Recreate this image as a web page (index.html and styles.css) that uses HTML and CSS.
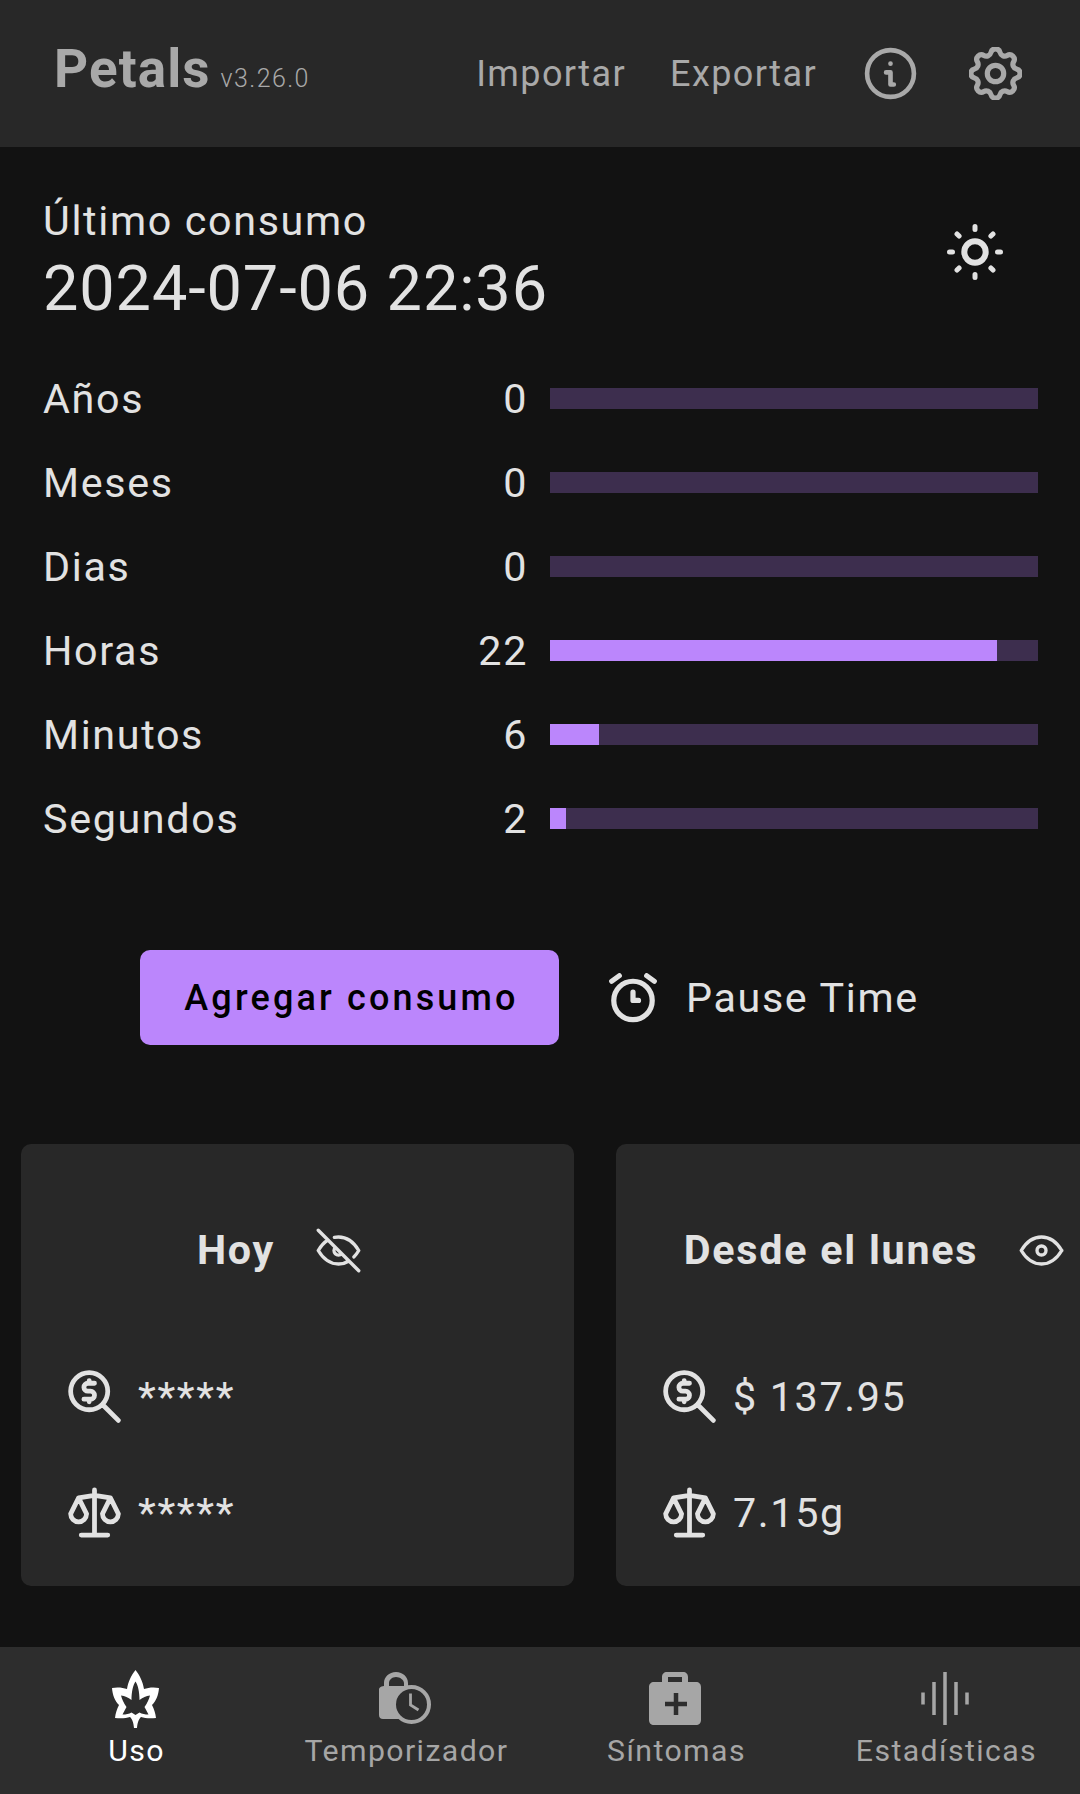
FILE: index.html
```html
<!DOCTYPE html>
<html lang="es">
<head>
  <meta charset="UTF-8" />
  <meta name="viewport" content="width=device-width, initial-scale=1.0"/>
  <title>Petals</title>
  <link rel="stylesheet" href="styles.css">
</head>
<body>

  <header class="topbar">
    <div class="brand">
      <span class="brand-name">Petals</span>
      <span class="brand-version">v3.26.0</span>
    </div>
    <nav class="topbar-actions">
      <a class="topbar-link">Importar</a>
      <a class="topbar-link">Exportar</a>
      <svg class="topbar-icon info-icon" viewBox="0 0 24 24">
        <circle cx="12" cy="12" r="10.6"/>
        <path d="M12 7.500v.1M10 11.500H12V17H13.500"/>
      </svg>
      <svg class="topbar-icon gear-icon" viewBox="2.3 2.3 19.4 19.4">
        <path d="M10.325 4.317c.426 -1.756 2.924 -1.756 3.35 0a1.724 1.724 0 0 0 2.573 1.066c1.543 -.94 3.31 .826 2.37 2.37a1.724 1.724 0 0 0 1.065 2.572c1.756 .426 1.756 2.924 0 3.35a1.724 1.724 0 0 0 -1.066 2.573c.94 1.543 -.826 3.31 -2.37 2.37a1.724 1.724 0 0 0 -2.572 1.065c-.426 1.756 -2.924 1.756 -3.35 0a1.724 1.724 0 0 0 -2.573 -1.066c-1.543 .94 -3.31 -.826 -2.37 -2.37a1.724 1.724 0 0 0 -1.065 -2.572c-1.756 -.426 -1.756 -2.924 0 -3.35a1.724 1.724 0 0 0 1.066 -2.573c-.94 -1.543 .826 -3.31 2.37 -2.37c1 .608 2.296 .07 2.572 -1.065z"/>
        <circle cx="12" cy="12" r="3"/>
      </svg>
    </nav>
  </header>

  <main class="content">
    <section class="timer">
      <div class="last-use">
        <div>
          <div class="last-use-label">Último consumo</div>
          <div class="last-use-date">2024-07-06 22:36</div>
        </div>
        <svg class="sun-icon" viewBox="0 0 58 58">
          <circle class="sun-ring" cx="29" cy="29" r="10.700"/>
          <path d="M29 3.500v3M29 51.500v3M3.500 29h3M51.500 29h3M11 11l2.100 2.100M47 11l-2.100 2.100M11 47l2.100 -2.100M47 47l-2.100 -2.100"/>
        </svg>
      </div>

      <div class="time-rows">
        <div class="time-row">
          <span>Años</span><span class="time-value">0</span>
          <div class="bar"><div class="bar-fill" style="width: 0%"></div></div>
        </div>
        <div class="time-row">
          <span>Meses</span><span class="time-value">0</span>
          <div class="bar"><div class="bar-fill" style="width: 0%"></div></div>
        </div>
        <div class="time-row">
          <span>Dias</span><span class="time-value">0</span>
          <div class="bar"><div class="bar-fill" style="width: 0%"></div></div>
        </div>
        <div class="time-row">
          <span>Horas</span><span class="time-value">22</span>
          <div class="bar"><div class="bar-fill" style="width: 91.67%"></div></div>
        </div>
        <div class="time-row">
          <span>Minutos</span><span class="time-value">6</span>
          <div class="bar"><div class="bar-fill" style="width: 10%"></div></div>
        </div>
        <div class="time-row">
          <span>Segundos</span><span class="time-value">2</span>
          <div class="bar"><div class="bar-fill" style="width: 3.33%"></div></div>
        </div>
      </div>
    </section>

    <div class="actions">
      <button class="add-btn">Agregar consumo</button>
      <div class="pause">
        <svg class="alarm-icon" viewBox="3.3 3 17.4 18.2">
          <path d="M5 13a7 7 0 1 0 14 0a7 7 0 0 0 -14 0M12 10v3h2M7 4l-2.750 2M17 4l2.750 2"/>
        </svg>
        <span>Pause Time</span>
      </div>
    </div>

    <div class="cards">
      <div class="card">
        <div class="card-title">
          <h3>Hoy</h3>
          <svg class="eye-icon" viewBox="2 2 20 20">
            <path d="M10.585 10.587a2 2 0 0 0 2.829 2.828M16.681 16.673a8.717 8.717 0 0 1 -4.681 1.327c-3.600 0 -6.600 -2 -9 -6c1.272 -2.120 2.712 -3.678 4.320 -4.674m2.860 -1.146a9.055 9.055 0 0 1 1.820 -.18c3.600 0 6.600 2 9 6c-.666 1.110 -1.379 2.067 -2.138 2.870M3 3l18 18"/>
          </svg>
        </div>
        <div class="stat">
          <svg class="stat-icon" viewBox="2 2 20 20">
            <path d="M3 10a7 7 0 1 0 14 0a7 7 0 1 0 -14 0M21 21l-6 -6M12 7h-2.500a1.500 1.500 0 0 0 0 3h1a1.500 1.500 0 0 1 0 3h-2.500M10 13v1m0 -8v1"/>
          </svg>
          <span>*****</span>
        </div>
        <div class="stat">
          <svg class="stat-icon" viewBox="2 2 20 19">
            <path d="M7 20h10M6 6l6 -1l6 1M12 3v17M9 12l-3 -6l-3 6a3 3 0 0 0 6 0M21 12l-3 -6l-3 6a3 3 0 0 0 6 0"/>
          </svg>
          <span>*****</span>
        </div>
      </div>

      <div class="card">
        <div class="card-title">
          <h3>Desde el lunes</h3>
          <svg class="eye-icon" viewBox="2 2 20 20">
            <path d="M10 12a2 2 0 1 0 4 0a2 2 0 0 0 -4 0M21 12c-2.400 4 -5.400 6 -9 6c-3.600 0 -6.600 -2 -9 -6c2.400 -4 5.400 -6 9 -6c3.600 0 6.600 2 9 6"/>
          </svg>
        </div>
        <div class="stat">
          <svg class="stat-icon" viewBox="2 2 20 20">
            <path d="M3 10a7 7 0 1 0 14 0a7 7 0 1 0 -14 0M21 21l-6 -6M12 7h-2.500a1.500 1.500 0 0 0 0 3h1a1.500 1.500 0 0 1 0 3h-2.500M10 13v1m0 -8v1"/>
          </svg>
          <span>$ 137.95</span>
        </div>
        <div class="stat">
          <svg class="stat-icon" viewBox="2 2 20 19">
            <path d="M7 20h10M6 6l6 -1l6 1M12 3v17M9 12l-3 -6l-3 6a3 3 0 0 0 6 0M21 12l-3 -6l-3 6a3 3 0 0 0 6 0"/>
          </svg>
          <span>7.15g</span>
        </div>
      </div>
    </div>
  </main>

  <nav class="tabs">
    <div class="tab active">
      <div class="tab-icon">
        <svg class="leaf-icon" viewBox="0 0 47 58">
          <path fill-rule="evenodd" d="M23.500 0C27.500 5 31 12 32 19C36 17.500 42 17 47 18C46.500 25 44 31 40 35C42 39 43.500 43 44 48C39 48.500 33 48.500 29 47C27 49 25.500 52 25 58H22C21.500 52 20 49 18 47C14 48.500 8 48.500 3 48C3.500 43 5 39 7 35C3 31 .5 25 0 18C5 17 11 17.500 15 19C16 12 19.500 5 23.500 0ZM23.500 11.500C21 15 19.500 22 19.500 30C16 27.500 13 26 9 25.500C10 29 11.500 33 14.500 37L10.500 44.500C14 44.500 17 44 19.500 42.500L23.500 45L27.500 42.500C30 44 33 44.500 36.500 44.500L32.500 37C35.500 33 37 29 38 25.500C34 26 31 27.500 27.500 30C27.500 22 26 15 23.500 11.500Z"/>
        </svg>
      </div>
      <span>Uso</span>
    </div>
    <div class="tab">
      <div class="tab-icon">
        <svg class="bag-clock-icon" viewBox="0 0 53 53">
          <path class="fill" fill-rule="evenodd" d="M17 0C24 0 29 5 29 11V14H32V47H4C1.500 47 0 45.500 0 43V18C0 16 1 14.500 5 14V11C5 5 10 0 17 0ZM17 5C13 5 10 8 10 11V14H25V11C25 8 21 5 17 5Z"/>
          <circle class="clock-ring" cx="32.500" cy="32.500" r="17.500"/>
          <path class="clock-hands" d="M31.500 21.500V33L39.500 38"/>
        </svg>
      </div>
      <span>Temporizador</span>
    </div>
    <div class="tab">
      <div class="tab-icon">
        <svg class="kit-icon" viewBox="0 0 52 53">
          <path class="fill" fill-rule="evenodd" d="M18 0H34C37 0 39 2 39 5V10H47C50 10 52 12 52 15V48C52 51 50 53 47 53H5C2 53 0 51 0 48V15C0 12 2 10 5 10H13V5C13 2 15 0 18 0ZM19 5V10H33V5Z"/>
          <path class="kit-plus" d="M27 21V43M16 32H38"/>
        </svg>
      </div>
      <span>Síntomas</span>
    </div>
    <div class="tab">
      <div class="tab-icon">
        <svg class="wave-icon" viewBox="0 0 48 53">
          <path d="M2 20.500V32.500M13 10V43M24 0V53M35 10V43M46 20.500V32.500"/>
        </svg>
      </div>
      <span>Estadísticas</span>
    </div>
  </nav>

</body>
</html>
```

FILE: styles.css
```css
* {
  box-sizing: border-box;
}

html, body {
  height: 100%;
}

body {
  display: flex;
  flex-direction: column;
  width: 1080px;
  height: 1794px;
  margin: 0;
  overflow: hidden;
  background: #121212;
  color: #e2e2e2;
  font-family: Roboto, "Noto Sans", sans-serif;
  font-size: 41.25px;
  letter-spacing: 1.65px;
}

svg {
  flex: none;
  display: block;
  fill: none;
  stroke: currentColor;
  stroke-linecap: round;
  stroke-linejoin: round;
}

/* top bar */
.topbar {
  flex: none;
  display: flex;
  justify-content: space-between;
  align-items: center;
  height: 147px;
  padding: 0 58px 0 54px;
  background: #282828;
  color: #a9a9a9;
}

.brand {
  display: flex;
  align-items: baseline;
  gap: 10px;
  margin-bottom: 9px;
}

.brand-name {
  font-size: 53px;
  font-weight: 700;
  letter-spacing: 1.1px;
}

.brand-version {
  font-size: 25px;
  font-weight: 300;
  letter-spacing: 1.4px;
}

.topbar-actions {
  display: flex;
  align-items: center;
}

.topbar-link {
  margin-right: 44px;
  font-size: 36px;
  letter-spacing: 1.4px;
}

.topbar-icon {
  width: 53px;
  height: 53px;
}

.info-icon {
  margin: 0 52px 0 3px;
  stroke-width: 2.100;
}

.gear-icon {
  stroke-width: 1.900;
}

/* tiempo desde el ultimo consumo */
.timer {
  padding: 50px 42px 0 43px;
}

.last-use {
  display: flex;
  justify-content: space-between;
  align-items: flex-start;
  margin-bottom: 30px;
}

.last-use-label {
  line-height: 48px;
}

.last-use-date {
  margin-top: 7px;
  font-size: 63px;
  line-height: 74px;
  letter-spacing: 0.9px;
}

.sun-icon {
  width: 58px;
  height: 58px;
  margin: 26px 34px 0 0;
  stroke-width: 5;
}

.sun-ring {
  stroke-width: 6;
}

.time-row {
  display: grid;
  grid-template-columns: 1fr auto 488px;
  align-items: center;
  column-gap: 22px;
  height: 84px;
}

.time-row span {
  padding-top: 2px;
}

.time-value {
  text-align: right;
}

.bar {
  height: 21px;
  background: #3d2e4e;
}

.bar-fill {
  height: 100%;
  background: #bb86fc;
}

/* botones */
.actions {
  display: flex;
  align-items: center;
  margin: 90px 0 0 140px;
}

.add-btn {
  width: 419px;
  height: 95px;
  padding: 0 0 0 4px;
  margin-right: 50px;
  border: none;
  border-radius: 10px;
  background: #bb86fc;
  color: #000;
  font-family: inherit;
  font-size: 36px;
  font-weight: 500;
  letter-spacing: 3.150px;
}

.pause {
  display: flex;
  align-items: center;
  gap: 29px;
}

.alarm-icon {
  width: 48px;
  height: 50px;
  stroke-width: 1.900;
}

/* tarjetas */
.cards {
  display: flex;
  gap: 42px;
  margin-top: 99px;
  padding-left: 21px;
}

.card {
  flex: none;
  width: 553px;
  height: 442px;
  padding: 86px 0 0 47px;
  border-radius: 10px;
  background: #282828;
}

.card-title {
  display: flex;
  justify-content: center;
  align-items: center;
  gap: 41px;
  height: 40px;
  margin: 0 84px 100px 0;
}

.card-title h3 {
  margin: 0;
  font-size: 41.25px;
  font-weight: 700;
  letter-spacing: 1.750px;
}

.eye-icon {
  width: 45px;
  height: 45px;
  stroke-width: 1.500;
}

.stat {
  display: flex;
  align-items: center;
  gap: 17px;
  height: 53px;
  margin-bottom: 63px;
}

.stat-icon {
  width: 53px;
  height: 53px;
  stroke-width: 1.800;
}

/* barra inferior */
.tabs {
  flex: none;
  display: grid;
  grid-template-columns: repeat(4, 1fr);
  height: 147px;
  margin-top: auto;
  background: #2d2d2d;
}

.tab {
  display: flex;
  flex-direction: column;
  align-items: center;
  padding-top: 25px;
  color: #a6a6a6;
  font-size: 30.25px;
  line-height: 36px;
  letter-spacing: 1.4px;
}

.tab span {
  margin-left: 3px;
}

.tab.active {
  color: #fff;
}

.tab-icon {
  display: flex;
  justify-content: center;
  align-items: center;
  height: 53px;
  margin-bottom: 8px;
}

.leaf-icon {
  width: 47px;
  height: 58px;
  fill: currentColor;
  stroke: none;
}

.bag-clock-icon {
  width: 53px;
  height: 53px;
}

.kit-icon {
  width: 52px;
  height: 53px;
}

.fill {
  fill: #a6a6a6;
  stroke: none;
}

.clock-ring {
  fill: #2d2d2d;
  stroke-width: 4;
}

.clock-hands {
  stroke-width: 2.800;
  stroke-linecap: butt;
  stroke-linejoin: miter;
}

.kit-plus {
  stroke: #2d2d2d;
  stroke-width: 4.500;
  stroke-linecap: butt;
}

.wave-icon {
  width: 48px;
  height: 53px;
  stroke-width: 3.500;
  stroke-linecap: butt;
}
```
